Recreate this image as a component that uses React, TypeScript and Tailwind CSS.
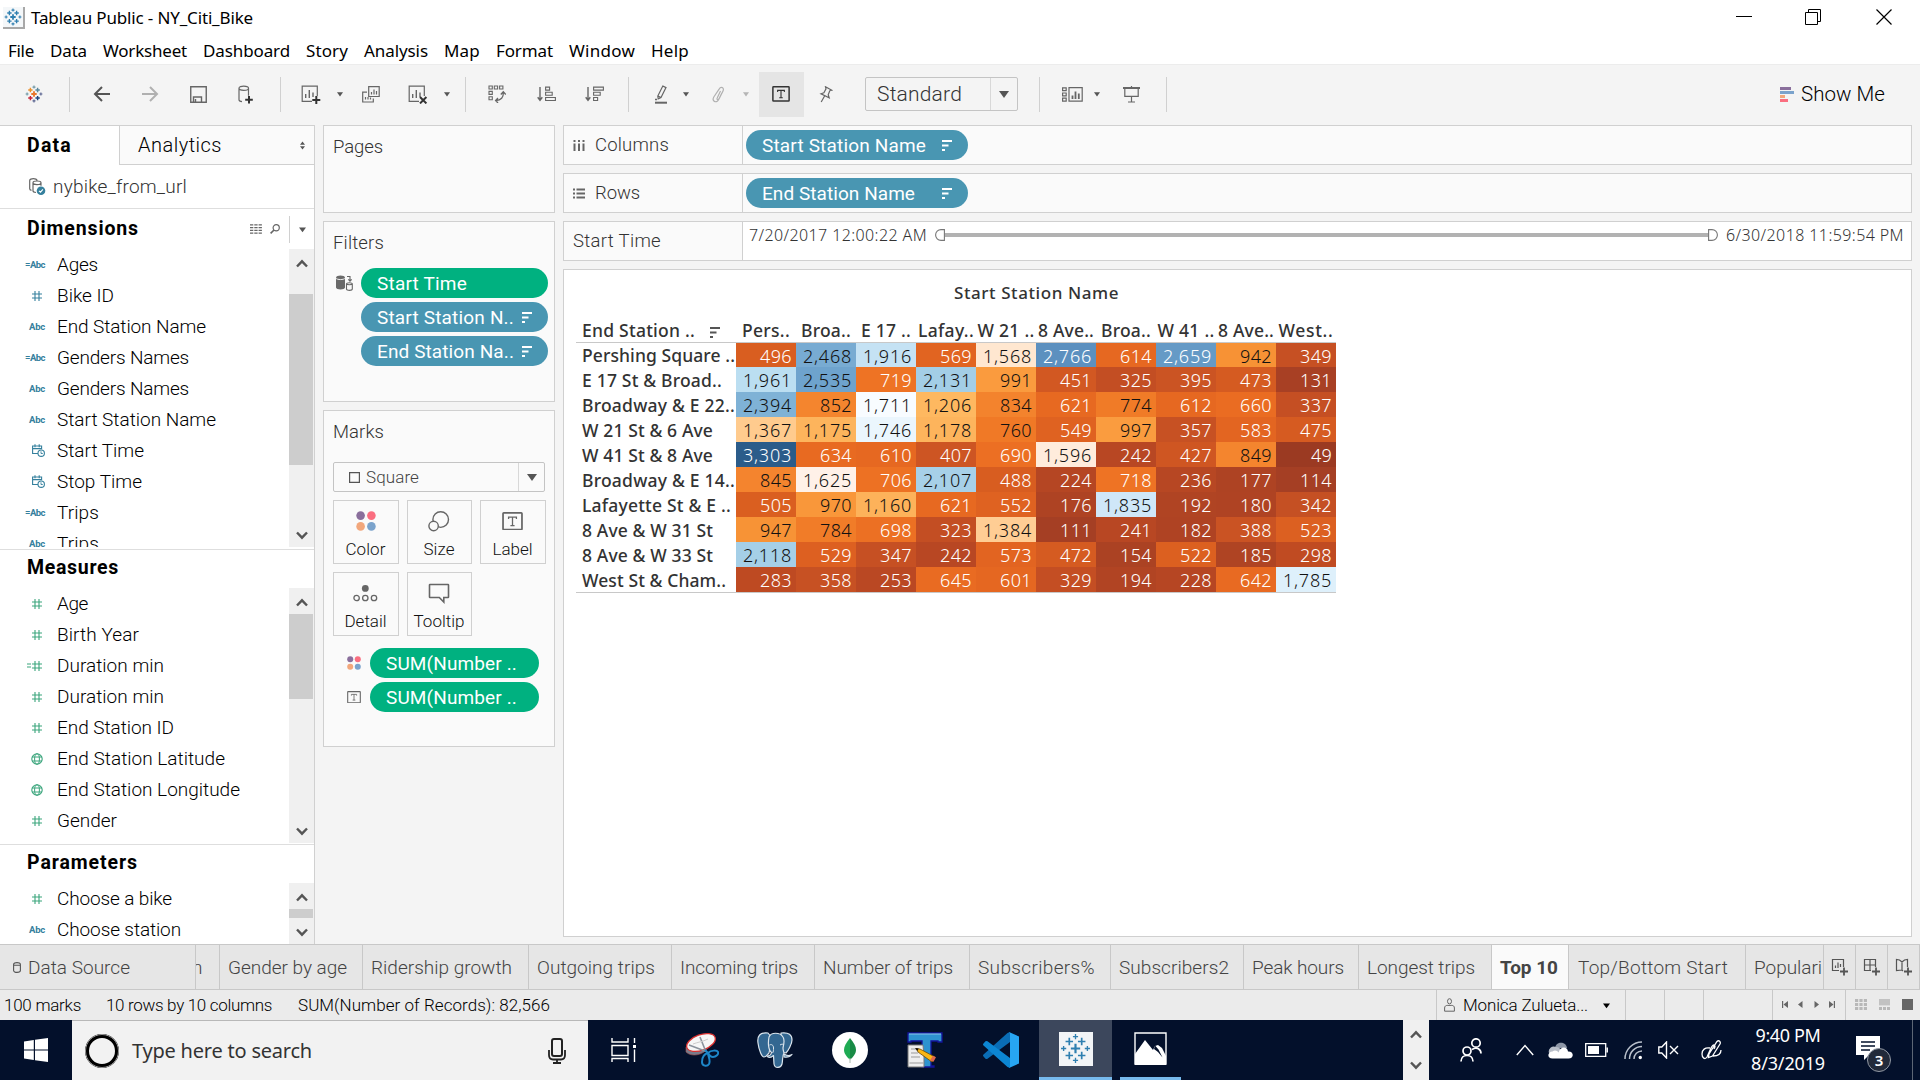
import React, { useLayoutEffect, useRef, useState } from "react";

/* Text run set to a fixed advance width by spreading the tracking. */
function T({ w, children, className = "" }: { w: number; children: string; className?: string }) {
  const ref = useRef<HTMLSpanElement>(null);
  const [ls, setLs] = useState(0);
  useLayoutEffect(() => {
    const el = ref.current;
    if (!el) return;
    el.style.letterSpacing = "0px";
    const natural = el.getBoundingClientRect().width;
    setLs((w - natural) / children.length);
    el.style.letterSpacing = (w - natural) / children.length + "px";
  }, [w, children]);
  return (
    <span ref={ref} className={"inline-block shrink-0 whitespace-pre leading-none " + className} style={{ letterSpacing: ls }}>
      {children}
    </span>
  );
}

type IconProps = { w: number; h: number; children: React.ReactNode; className?: string; vb?: string };
const I = ({ w, h, children, className = "", vb }: IconProps) => (
  <svg width={w} height={h} viewBox={vb ?? `0 0 ${w} ${h}`} fill="none" className={"block shrink-0 " + className}>
    {children}
  </svg>
);

const Caret = ({ s = 6, c = "#555" }: { s?: number; c?: string }) => (
  <I w={s} h={s} vb="0 0 10 10"><path d="M0 2h10L5 9z" fill={c} /></I>
);

/* ---------- Tableau mark ---------- */
const plus = (x: number, y: number, r: number) => `M${x - r} ${y}h${2 * r}M${x} ${y - r}v${2 * r}`;
const Mark = ({ s, cs, sw = 1.4 }: { s: number; cs: string[]; sw?: number }) => (
  <I w={s} h={s} vb="0 0 24 24">
    <path d={plus(12, 12, 3.6)} stroke={cs[0]} strokeWidth={sw * 1.3} />
    <path d={plus(7.2, 6.6, 2.9)} stroke={cs[1]} strokeWidth={sw} />
    <path d={plus(16.8, 6.6, 2.9)} stroke={cs[2]} strokeWidth={sw} />
    <path d={plus(7.2, 17.4, 2.9)} stroke={cs[3]} strokeWidth={sw} />
    <path d={plus(16.8, 17.4, 2.9)} stroke={cs[4]} strokeWidth={sw} />
    <path d={plus(12, 2.8, 2)} stroke={cs[5]} strokeWidth={sw * 0.8} />
    <path d={plus(12, 21.2, 2)} stroke={cs[6]} strokeWidth={sw * 0.8} />
    <path d={plus(2.8, 12, 2)} stroke={cs[5]} strokeWidth={sw * 0.8} />
    <path d={plus(21.2, 12, 2)} stroke={cs[6]} strokeWidth={sw * 0.8} />
  </I>
);
const blueMark = Array(7).fill("#2f7fb0");

/* ---------- toolbar ---------- */
const G = "#666";
const Slot = ({ className, children }: { className: string; children?: React.ReactNode }) => (
  <div className={"flex h-full shrink-0 items-center justify-center overflow-visible " + className}>{children}</div>
);
const Sep = ({ className = "" }: { className?: string }) => <div className={"h-[35px] w-px shrink-0 bg-[#d0d0d0] " + className} />;

const ArrowL = ({ c, flip }: { c: string; flip?: boolean }) => (
  <I w={18} h={16} className={flip ? "-scale-x-100" : ""}>
    <path d="M17 8H2M9 1L2 8l7 7" stroke={c} strokeWidth="2" />
  </I>
);
const Save = () => (
  <I w={17} h={17}>
    <path d="M.75 .75h15.5v15.5H.75zM3.5 16v-5h8v5M5.5 16v-3" stroke={G} strokeWidth="1.4" />
  </I>
);
const DbPlus = () => (
  <I w={16} h={19}>
    <path d="M1 3.2C1 .4 10.5.4 10.5 3.2S1 6 1 3.2v11.5c0 1 1.2 1.7 3 1.9M10.5 3.2v7.5" stroke={G} strokeWidth="1.2" />
    <path d="M11 11v7.5M7.2 14.8h7.6" stroke="#333" strokeWidth="2" />
  </I>
);
const Sheet = ({ x }: { x?: boolean }) => (
  <I w={20} h={19}>
    <path d="M11 16.3H1.2V1.2h15.1V11" stroke={G} strokeWidth="1.2" />
    <path d="M4.7 13V9M8.3 13V5M12 12V7.5" stroke={G} strokeWidth="1.4" />
    {x ? <path d="M12 12l6.4 6.4M18.4 12L12 18.4" stroke="#333" strokeWidth="2" /> : <path d="M15.3 11v8M11.3 15h8" stroke="#333" strokeWidth="2" />}
  </I>
);
const Dup = () => (
  <I w={18} h={17}>
    <path d="M6.7 .7h10.5v9.8H6.7z" stroke={G} strokeWidth="1.2" />
    <path d="M9.5 8.5V6M12 8.5V3.5M14.5 8.5V5" stroke={G} strokeWidth="1.2" />
    <path d="M5 6.2H.7v9.8h10.6v-3.5M3.5 13.5V11M6 13.5v-2.5M8.5 13.5v-2" stroke={G} strokeWidth="1.2" />
  </I>
);
const Swap = () => (
  <I w={18} h={18}>
    <path d="M1 1h3.3v3H1zM6.3 1h3.3v3H6.3zM11.6 1h3.3v3h-3.3zM1 6.4h3.3v3H1zM1 11.8h3.3v3H1z" stroke={G} strokeWidth="1.1" />
    <path d="M15.3 7.5c.3 5-2.2 7.800-7.500 8M12.800 9.500l2.500-2.700 2.500 2.700M10 13l-2.400 2.500L10 18" stroke={G} strokeWidth="1.3" />
  </I>
);
const SortBars = ({ desc }: { desc?: boolean }) => (
  <I w={19} h={16}>
    <path d="M3 1v13M.7 11.3L3 14.3l2.3-3" stroke={G} strokeWidth="1.4" />
    {desc ? (
      <path d="M8.6 1.1h9.8v3H8.6zM8.6 6.3h6.6v3H8.6zM8.6 11.5h4v3h-4z" stroke={G} strokeWidth="1.1" />
    ) : (
      <path d="M8.6 1.1h4v3h-4zM8.6 6.3h6.6v3H8.6zM8.6 11.5h9.8v3H8.6z" stroke={G} strokeWidth="1.1" />
    )}
  </I>
);
const Pen = () => (
  <I w={14} h={19}>
    <path d="M8.8 1l3.2 1.6-5 10-2.8 1.3-.4-2.9zM4 11l3 1.5" stroke={G} strokeWidth="1.2" />
    <path d="M1 14.5h2" stroke={G} strokeWidth="1.4" />
    <path d="M1 17.7h12" stroke={G} strokeWidth="2" />
  </I>
);
const Clip = () => (
  <I w={14} h={17}>
    <path d="M9.500 5L6.200 12c-.8 1.600 1 2.400 1.800.9L12 5c1.700-3.400-2.200-5-3.900-1.800L2.800 11c-2.300 4 2.500 6.700 4.600 3l3.200-6.500" stroke="#b0b0b0" strokeWidth="1.2" />
  </I>
);
const TBox = ({ s, c = "#444", sw = 1.5 }: { s: number; c?: string; sw?: number }) => (
  <I w={s} h={s * 0.88} vb="0 0 18 16">
    <rect x=".8" y=".8" width="16.4" height="14.4" rx=".6" stroke={c} strokeWidth={sw} />
    <path d="M5.6 6V4.4h6.8V6M9 4.4v7.4M7.2 11.8h3.6" stroke={c} strokeWidth="1.1" />
  </I>
);
const Pin = () => (
  <I w={14} h={17}>
    <path d="M6.500 .8l6.300 3.400-2 .6-1.600 4 1 3-8.200-4 2.900-1L7 2.800zM5.600 10l-3.400 6" stroke={G} strokeWidth="1.2" />
  </I>
);
const Cards = () => (
  <I w={21} h={15}>
    <path d="M.6 .8h3.6v2.9H.6zM.6 6h3.6v2.9H.6zM.6 11.2h3.6v2.9H.6zM7 .7h13.2v13.5H7z" stroke={G} strokeWidth="1.2" />
    <path d="M10.5 12V8.5M13.5 12V4.5M16.8 12V6.5" stroke={G} strokeWidth="1.8" />
  </I>
);
const Present = () => (
  <I w={17} h={17}>
    <path d="M0 2h17" stroke={G} strokeWidth="2" />
    <path d="M1.8 2.5v7.8h13.4V2.5M8.5 0v2M8.5 10.5v5.3M5 16h7" stroke={G} strokeWidth="1.2" />
  </I>
);

/* ---------- pills ---------- */
const SortGlyph = ({ c = "#fff" }: { c?: string }) => (
  <I w={10} h={11}>
    <path d="M0 1h10M0 5.5h6.5M0 10h3" stroke={c} strokeWidth="2" />
  </I>
);
const Pill = ({ label, w, green, sort, className }: { label: string; w: number; green?: boolean; sort?: string; className: string }) => (
  <div className={"flex h-[30px] items-center rounded-full text-[19px] font-normal text-white " + (green ? "bg-[#00b180] " : "bg-[#4996b2] ") + className}>
    <T w={w}>{label}</T>
    {sort && <div className={sort}><SortGlyph /></div>}
  </div>
);

/* ---------- data pane ---------- */
type Kind = "abc" | "cabc" | "num" | "cnum" | "date" | "geo";
const Hash = ({ c }: { c: string }) => (
  <I w={10} h={10}><path d="M3 0v10M7 0v10M0 3h10M0 7h10" stroke={c} strokeWidth="1.1" /></I>
);
const FieldIcon = ({ kind, c }: { kind: Kind; c: string }) => (
  <div className="flex w-[45px] items-center justify-end">
    {kind === "abc" && <T w={16} className="text-[9.5px] font-bold text-[#35809d]">Abc</T>}
    {kind === "cabc" && <T w={20} className="text-[9.5px] font-bold text-[#35809d]">=Abc</T>}
    {kind === "num" && <div className="mr-[3px]"><Hash c={c} /></div>}
    {kind === "cnum" && (
      <div className="mr-[3px] flex items-center gap-px">
        <I w={4} h={5}><path d="M0 1h4M0 4h4" stroke={c} strokeWidth="1.1" /></I>
        <Hash c={c} />
      </div>
    )}
    {kind === "date" && (
      <I w={13} h={13}>
        <path d="M6 9.5H.6V2h9v3.2M.6 4.6h9M3 .3v3M7.2 .3v3" stroke={c} strokeWidth="1.1" />
        <circle cx="9.2" cy="9.2" r="3.2" stroke={c} strokeWidth="1.1" />
        <path d="M9 7.3v2.2h1.8" stroke={c} strokeWidth=".9" />
      </I>
    )}
    {kind === "geo" && (
      <div className="mr-[2px]">
        <I w={12} h={12}>
          <circle cx="6" cy="6" r="5.2" stroke={c} strokeWidth="1.1" />
          <ellipse cx="6" cy="6" rx="2.4" ry="5.2" stroke={c} />
          <path d="M1 4h10M1 8h10" stroke={c} />
        </I>
      </div>
    )}
  </div>
);
type Field = [Kind, string, number];
const blue = "#35809d";
const green = "#3ba57c";
const dims: Field[] = [
  ["cabc", "Ages", 41], ["num", "Bike ID", 57], ["abc", "End Station Name", 149], ["cabc", "Genders Names", 132],
  ["abc", "Genders Names", 132], ["abc", "Start Station Name", 159], ["date", "Start Time", 87], ["date", "Stop Time", 85],
  ["cabc", "Trips", 42], ["abc", "Trips", 42],
];
const meas: Field[] = [
  ["num", "Age", 31], ["num", "Birth Year", 82], ["cnum", "Duration min", 107], ["num", "Duration min", 107],
  ["num", "End Station ID", 117], ["geo", "End Station Latitude", 168], ["geo", "End Station Longitude", 183], ["num", "Gender", 60],
];
const params: Field[] = [["num", "Choose a bike", 115], ["abc", "Choose station", 124]];

const Fields = ({ items, c, className, thumb }: { items: Field[]; c: string; className: string; thumb: string }) => (
  <div className={"flex overflow-hidden " + className}>
    <div className="min-w-0 flex-1">
      {items.map(([k, name, w], i) => (
        <div key={i} className="flex h-[31px] items-center">
          <FieldIcon kind={k} c={c} />
          <T w={w} className="ml-[12px] text-[19px] font-light text-black">{name}</T>
        </div>
      ))}
    </div>
    <div className="flex w-[25px] flex-col items-start bg-[#f0f0f0]">
      <div className="flex h-[26px] w-[25px] shrink-0 items-center justify-center pt-[3px]">
        <I w={12} h={9}><path d="M1 7.5L6 2.3l5 5.2" stroke="#555" strokeWidth="2.4" /></I>
      </div>
      <div className={"w-[24px] shrink-0 bg-[#cdcdcd] " + thumb} />
      <div className="flex min-h-0 w-[25px] flex-1 items-end justify-center pb-[7px]">
        <I w={12} h={9}><path d="M1 1.5l5 5.2 5-5.2" stroke="#555" strokeWidth="2.4" /></I>
      </div>
    </div>
  </div>
);

/* ---------- heat map ---------- */
const scale: [number, number, number, number][] = [
  [49, 155, 58, 34], [131, 168, 64, 36], [176, 174, 67, 35], [242, 184, 71, 35], [283, 190, 74, 34], [347, 198, 80, 35],
  [395, 203, 84, 35], [451, 210, 88, 34], [496, 217, 94, 32], [549, 223, 98, 33], [614, 230, 104, 33], [660, 234, 108, 34],
  [706, 237, 113, 35], [784, 241, 124, 40], [849, 244, 133, 46], [942, 247, 146, 53], [991, 250, 155, 62], [1175, 253, 180, 92],
  [1206, 254, 184, 96], [1367, 255, 203, 142], [1568, 255, 231, 208], [1625, 255, 241, 232], [1711, 248, 252, 255],
  [1746, 235, 246, 253], [1785, 222, 240, 251], [1835, 207, 231, 248], [1916, 197, 226, 244], [1961, 187, 222, 241],
  [2118, 165, 207, 231], [2394, 127, 178, 214], [2468, 120, 171, 210], [2535, 110, 163, 205], [2659, 101, 154, 198],
  [2766, 92, 144, 191], [3303, 43, 92, 138],
];
function heat(v: number) {
  let i = 0;
  while (i < scale.length - 2 && v > scale[i + 1][0]) i++;
  const a = scale[i];
  const b = scale[i + 1];
  const t = (v - a[0]) / (b[0] - a[0]);
  return `rgb(${[1, 2, 3].map((k) => Math.round(a[k] + (b[k] - a[k]) * t)).join(",")})`;
}
const cols: [string, number][] = [
  ["Pers..", 48], ["Broa..", 50], ["E 17 ..", 50], ["Lafay..", 56], ["W 21 ..", 57],
  ["8 Ave..", 56], ["Broa..", 50], ["W 41 ..", 57], ["8 Ave..", 56], ["West..", 55],
];
const rows: [string, number, number[]][] = [
  ["Pershing Square ..", 153, [496, 2468, 1916, 569, 1568, 2766, 614, 2659, 942, 349]],
  ["E 17 St & Broad..", 140, [1961, 2535, 719, 2131, 991, 451, 325, 395, 473, 131]],
  ["Broadway & E 22..", 153, [2394, 852, 1711, 1206, 834, 621, 774, 612, 660, 337]],
  ["W 21 St & 6 Ave", 131, [1367, 1175, 1746, 1178, 760, 549, 997, 357, 583, 475]],
  ["W 41 St & 8 Ave", 131, [3303, 634, 610, 407, 690, 1596, 242, 427, 849, 49]],
  ["Broadway & E 14..", 153, [845, 1625, 706, 2107, 488, 224, 718, 236, 177, 114]],
  ["Lafayette St & E ..", 149, [505, 970, 1160, 621, 552, 176, 1835, 192, 180, 342]],
  ["8 Ave & W 31 St", 131, [947, 784, 698, 323, 1384, 111, 241, 182, 388, 523]],
  ["8 Ave & W 33 St", 131, [2118, 529, 347, 242, 573, 472, 154, 522, 185, 298]],
  ["West St & Cham..", 144, [283, 358, 253, 645, 601, 329, 194, 228, 642, 1785]],
];

const HeatMap = () => (
  <div className="ml-[12px] w-[760px] font-['Noto_Sans',sans-serif] text-[#333]">
    <div className="flex h-[46px] items-center pb-[2px] pl-[378px] text-[17px] font-medium"><T w={165}>Start Station Name</T></div>
    <div className="flex h-[27px] items-end border-b border-[#c8c8c8] pb-[3px] text-[17.5px] font-medium">
      <div className="flex w-[160px] items-center pl-[6px]">
        <T w={113}>End Station ..</T>
        <div className="ml-[15px] pt-1"><SortGlyph c="#555" /></div>
      </div>
      {cols.map(([c, w], i) => (
        <div key={i} className="flex w-[60px] justify-center"><T w={w}>{c}</T></div>
      ))}
    </div>
    <div className="border-b border-[#c8c8c8]">
      {rows.map(([name, w, vals], r) => (
        <div key={r} className={"flex " + (r ? "h-[25px]" : "h-[24px]")}>
          <div className="flex w-[160px] items-center pt-[2px] pl-[6px] text-[17.5px] font-medium"><T w={w}>{name}</T></div>
          {vals.map((v, i) => {
            const dark = v >= 740 && v < 2600;
            return (
              <div
                key={i}
                className={"flex w-[60px] items-center justify-end pt-px pr-[4px] text-[18px] font-light " + (dark ? "text-[#111]" : "text-white")}
                style={{ backgroundColor: heat(v) }}
              >
                <T w={v >= 1000 ? 49 : v >= 100 ? 32 : 21}>{v.toLocaleString("en-US")}</T>
              </div>
            );
          })}
        </div>
      ))}
    </div>
  </div>
);

/* ---------- cards ---------- */
const Dots = ({ s }: { s: number }) => (
  <I w={s} h={s} vb="0 0 20 20">
    <circle cx="4.6" cy="4.6" r="4.3" fill="#8a6f9c" /><circle cx="15.4" cy="4.6" r="4.3" fill="#fa6e80" />
    <circle cx="4.6" cy="15.4" r="4.3" fill="#f2a77c" /><circle cx="15.4" cy="15.4" r="4.3" fill="#7ba3cc" />
  </I>
);
const MarkButton = ({ label, w, className, children }: { label: string; w: number; className: string; children: React.ReactNode }) => (
  <div className={"flex h-[64px] flex-col items-center border border-[#d0d0d0] bg-[#fafafa] " + className}>
    <div className="flex h-[40px] items-center justify-center pr-px">{children}</div>
    <T w={w} className="mr-px text-[17px] font-light text-[#111]">{label}</T>
  </div>
);

const tabs: [string, string, number][] = [
  ["w-[143px] pl-[8px]", "Gender by age", 119], ["w-[166px] pl-[8px]", "Ridership growth", 141], ["w-[143px] pl-[8px]", "Outgoing trips", 118],
  ["w-[143px] pl-[8px]", "Incoming trips", 118], ["w-[155px] pl-[8px]", "Number of trips", 130], ["w-[141px] pl-[8px]", "Subscribers%", 117],
  ["w-[133px] pl-[8px]", "Subscribers2", 110], ["w-[115px] pl-[8px]", "Peak hours", 92], ["w-[133px] pl-[8px]", "Longest trips", 108],
  ["w-[77px] pl-[8px] bg-[#fafafa] font-bold", "Top 10", 58], ["w-[177px] pl-[9px]", "Top/Bottom Start", 150], ["w-[78px] pl-[8px]", "Populari", 68],
];

const PlusBadge = () => <path d="M13 9.5v8M9 13.5h8" stroke="#555" strokeWidth="1.8" />;

export default function App() {
  return (
    <div className="flex h-[1080px] w-[1920px] flex-col overflow-hidden bg-[#f4f4f4] font-['Roboto',sans-serif] text-[#333]">
      {/* title bar */}
      <div className="flex h-[36px] shrink-0 items-center bg-white pb-px font-['Noto_Sans',sans-serif]">
        <div className="ml-[3px] flex h-[22px] w-[22px] items-center justify-center border-r-2 border-b-2 border-[#a8a8a8] bg-[#f4f7f9]">
          <Mark s={18} cs={blueMark} sw={1.8} />
        </div>
        <T w={222} className="ml-[6px] text-[17px] text-black">Tableau Public - NY_Citi_Bike</T>
        <div className="ml-auto flex items-center pr-[28px] pb-[2px]">
          <I w={16} h={16}><path d="M0 7.5h16" stroke="#000" /></I>
          <I w={16} h={16} className="ml-[53px]"><path d="M.5 3.5h12v12H.5zM3.5 3.5v-3h12v12h-3" stroke="#000" /></I>
          <I w={16} h={16} className="ml-[55px]"><path d="M.5 .5l15 15M15.5 .5l-15 15" stroke="#000" strokeWidth="1.2" /></I>
        </div>
      </div>
      {/* menu */}
      <div className="flex h-[28px] shrink-0 items-center gap-[16px] bg-white pl-[8px] font-['Noto_Sans',sans-serif] text-[17px] text-black">
        <T w={26}>File</T><T w={37}>Data</T><T w={84}>Worksheet</T><T w={87}>Dashboard</T><T w={42}>Story</T>
        <T w={64}>Analysis</T><T w={36}>Map</T><T w={57}>Format</T><T w={66}>Window</T><T w={38}>Help</T>
      </div>
      {/* toolbar */}
      <div className="flex h-[61px] shrink-0 items-center border-t border-[#ececec] pb-[2px]">
        <Slot className="w-[68px]"><Mark s={18} sw={1.9} cs={["#e8762c", "#eb912c", "#59879b", "#c72035", "#1f447e", "#7199a6", "#5b6591"]} /></Slot>
        <Sep className="ml-px" />
        <Slot className="w-[64px]"><ArrowL c="#555" /></Slot>
        <Slot className="w-[32px]"><ArrowL c="#b0b0b0" flip /></Slot>
        <Slot className="w-[64px]"><Save /></Slot>
        <Slot className="w-[32px]"><DbPlus /></Slot>
        <Sep className="ml-[18px]" />
        <Slot className="ml-[5px] w-[50px]"><Sheet /></Slot>
        <Slot className="w-[8px]"><Caret /></Slot>
        <Slot className="w-[54px]"><Dup /></Slot>
        <Slot className="w-[40px]"><Sheet x /></Slot>
        <Slot className="w-[18px]"><Caret /></Slot>
        <Sep className="ml-[9px]" />
        <Slot className="w-[62px]"><Swap /></Slot>
        <Slot className="w-[36px]"><SortBars /></Slot>
        <Slot className="w-[60px]"><SortBars desc /></Slot>
        <Sep className="ml-[4px]" />
        <Slot className="ml-[10px] w-[44px]"><Pen /></Slot>
        <Slot className="w-[6px]"><Caret /></Slot>
        <Slot className="ml-[4px] w-[50px]"><Clip /></Slot>
        <Slot className="w-[6px]"><Caret c="#b5b5b5" /></Slot>
        <div className="ml-[10px] flex h-[45px] w-[45px] shrink-0 items-center justify-center bg-[#e5e5e5] pr-[2px]"><TBox s={18} c="#333" /></div>
        <Slot className="w-[44px]"><Pin /></Slot>
        <div className="ml-[17px] flex h-[34px] w-[153px] shrink-0 items-center rounded-[2px] border border-[#c4c4c4] pl-[11px]">
          <T w={85} className="text-[21px] font-light">Standard</T>
          <div className="ml-auto flex h-full w-[27px] items-center justify-center border-l border-[#d8d8d8]"><Caret s={10} /></div>
        </div>
        <Sep className="ml-[21px]" />
        <Slot className="ml-[10px] w-[44px]"><Cards /></Slot>
        <Slot className="w-[6px]"><Caret /></Slot>
        <Slot className="w-[62px]"><Present /></Slot>
        <Sep className="ml-[4px]" />
        <div className="ml-auto flex items-center pr-[35px]">
          <I w={14} h={15}>
            <path d="M0 1.5h11" stroke="#8a6f9c" strokeWidth="3" /><path d="M0 5.5h14" stroke="#7ba3cc" strokeWidth="3" />
            <path d="M0 9.5h5" stroke="#f2a77c" strokeWidth="3" /><path d="M0 13.5h8" stroke="#fa6e80" strokeWidth="3" />
          </I>
          <T w={84} className="ml-[7px] text-[20.5px] font-light text-black">Show Me</T>
        </div>
      </div>

      {/* workspace */}
      <div className="flex h-[819px] shrink-0">
        {/* data pane */}
        <div className="flex w-[315px] shrink-0 flex-col border-r border-[#d0d0d0] bg-white">
          <div className="flex h-[40px] shrink-0 border-t border-[#d0d0d0]">
            <div className="flex w-[119px] items-center pl-[27px]"><T w={45} className="text-[19.5px] font-bold text-black">Data</T></div>
            <div className="flex flex-1 items-center border-b border-l border-[#d0d0d0] bg-[#fafafa] pl-[18px]">
              <T w={84} className="text-[20px] font-light text-black">Analytics</T>
              <I w={5} h={9} className="ml-auto mr-[9px]"><path d="M0 3.8h5L2.5 .5zM0 5.2h5L2.5 8.5z" fill="#555" /></I>
            </div>
          </div>
          <div className="flex h-[44px] shrink-0 items-center border-b border-[#dedede] pl-[29px]">
            <I w={17} h={18}>
              <path d="M.7 2.5C.7 0 8 0 8 2.5M.7 2.5v8.3c0 .8.6 1.3 1.8 1.5M4 4.8c0-2.4 8-2.4 8 0S4 7.2 4 4.8v8c0 1 1.2 1.6 3 1.7M12 4.8v3" stroke={G} strokeWidth="1.2" />
              <circle cx="12" cy="12.7" r="4.3" fill="#35809d" /><path d="M10 12.8l1.5 1.4 2.4-2.8" stroke="#fff" strokeWidth="1.1" />
            </I>
            <T w={134} className="ml-[7px] text-[19px] font-light text-[#333]">nybike_from_url</T>
          </div>
          <div className="flex h-[40px] shrink-0 items-center pl-[27px]">
            <T w={112} className="text-[19.5px] font-bold text-black">Dimensions</T>
            <I w={12} h={10} className="ml-auto">
              <path d="M0 .8h12M0 3.6h12M0 6.4h12M0 9.2h12" stroke={G} strokeDasharray="3.3 1" strokeWidth="1.2" />
            </I>
            <I w={10} h={10} className="ml-[8px]"><circle cx="6.2" cy="3.8" r="3.1" stroke={G} strokeWidth="1.2" /><path d="M4 6L.6 9.4" stroke={G} strokeWidth="1.6" /></I>
            <div className="ml-[9px] flex h-[27px] w-[25px] items-center justify-center border-l border-[#d0d0d0]"><Caret s={7} /></div>
          </div>
          <Fields items={dims} c={blue} className="h-[298px] shrink-0" thumb="mt-[19px] h-[171px]" />
          <div className="mt-[2px] flex h-[39px] shrink-0 items-center border-t border-[#dedede] pb-[2px] pl-[27px]">
            <T w={92} className="text-[19.5px] font-bold text-black">Measures</T>
          </div>
          <Fields items={meas} c={green} className="h-[255px] shrink-0" thumb="h-[85px]" />
          <div className="mt-px flex h-[39px] shrink-0 items-center border-t border-[#dedede] pb-[2px] pl-[27px]">
            <T w={111} className="text-[19.5px] font-bold text-black">Parameters</T>
          </div>
          <Fields items={params} c={green} className="h-[61px] shrink-0" thumb="h-[9px]" />
        </div>

        {/* cards */}
        <div className="ml-[8px] flex w-[232px] shrink-0 flex-col gap-[8px] font-light">
          <div className="flex h-[88px] items-start border border-[#d0d0d0] bg-[#fafafa] pt-[12px] pl-[9px]"><T w={50} className="text-[18.5px]">Pages</T></div>
          <div className="h-[181px] border border-[#d0d0d0] bg-[#fafafa] pl-[9px]">
            <div className="flex h-[46px] items-center pb-[4px]"><T w={51} className="text-[18.5px]">Filters</T></div>
            <div className="flex items-center">
              <I w={17} h={16} className="ml-[3px]">
                <path d="M0 2.5C0-.3 9-.3 9 2.5v10c0 2.6-9 2.6-9 0z" fill="#6a6a6a" /><path d="M0 3.2c1 1.8 8 1.8 9 0" stroke="#fafafa" strokeWidth=".9" />
                <path d="M11 1.5h3V6M12.3 4.3L14 6.2l1.7-1.9" stroke={G} strokeWidth="1.1" />
                <path d="M10.5 9c0-1.6 5.8-1.6 5.8 0v5c0 1.8-5.8 1.8-5.8 0zM10.5 9c.5 1 5.3 1 5.8 0" stroke={G} strokeWidth="1.1" />
              </I>
              <Pill label="Start Time" w={90} green className="ml-[8px] w-[187px] pl-[16px]" />
            </div>
            <Pill label="Start Station N.." w={137} sort="ml-[8px]" className="mt-[4px] ml-[28px] w-[187px] pl-[16px]" />
            <Pill label="End Station Na.." w={137} sort="ml-[8px]" className="mt-[4px] ml-[28px] w-[187px] pl-[16px]" />
          </div>
          <div className="h-[337px] border border-[#d0d0d0] bg-[#fafafa] pl-[9px]">
            <div className="flex h-[51px] items-center pb-[9px]"><T w={51} className="text-[18.5px]">Marks</T></div>
            <div className="flex h-[30px] w-[212px] items-center rounded-[2px] border border-[#c4c4c4] pl-[15px]">
              <I w={11} h={11}><path d="M.6 .6h9.8v9.8H.6z" stroke="#555" strokeWidth="1.2" /></I>
              <T w={53} className="ml-[6px] text-[17px] text-[#444]">Square</T>
              <div className="ml-auto flex h-full w-[26px] items-center justify-center border-l border-[#d8d8d8]"><Caret s={10} /></div>
            </div>
            <div className="mt-[8px] flex">
              <MarkButton label="Color" w={40} className="w-[66px]"><Dots s={20} /></MarkButton>
              <MarkButton label="Size" w={31} className="ml-[8px] w-[65px]">
                <I w={22} h={21}><circle cx="12.7" cy="8.6" r="7.8" stroke={G} strokeWidth="1.4" /><circle cx="5.6" cy="15" r="4.7" fill="#fafafa" stroke={G} strokeWidth="1.4" /></I>
              </MarkButton>
              <MarkButton label="Label" w={40} className="ml-[8px] w-[66px]"><TBox s={21} c={G} /></MarkButton>
            </div>
            <div className="mt-[8px] flex">
              <MarkButton label="Detail" w={42} className="w-[66px]">
                <I w={25} h={17}>
                  <circle cx="12.3" cy="3.4" r="3.4" fill={G} />
                  <circle cx="3.6" cy="13" r="2.7" stroke={G} strokeWidth="1.3" /><circle cx="12.3" cy="13" r="2.7" stroke={G} strokeWidth="1.3" /><circle cx="21" cy="13" r="2.7" stroke={G} strokeWidth="1.3" />
                </I>
              </MarkButton>
              <MarkButton label="Tooltip" w={51} className="ml-[8px] w-[65px]">
                <I w={22} h={21}><path d="M2 1.5h18q.5 0 .5.5v12q0 .5-.5.5h-4.2V19l-4.500-4.500H2q-.5 0-.5-.5V2q0-.5.5-.5z" stroke={G} strokeWidth="1.6" /></I>
              </MarkButton>
            </div>
            <div className="mt-[12px] flex items-center pl-[14px]"><Dots s={14} /><Pill label="SUM(Number .." w={131} green className="ml-[9px] w-[169px] pl-[16px]" /></div>
            <div className="mt-[4px] flex items-center pl-[14px]"><TBox s={14} c={G} sw={1.4} /><Pill label="SUM(Number .." w={131} green className="ml-[9px] w-[169px] pl-[16px]" /></div>
          </div>
        </div>

        {/* shelves and view */}
        <div className="ml-[8px] flex w-[1349px] shrink-0 flex-col gap-[8px] font-light">
          <div className="flex h-[40px] border border-[#d0d0d0] bg-[#fafafa]">
            <div className="flex w-[179px] items-center border-r border-[#d0d0d0] pl-[9px]">
              <I w={12} h={11}><path d="M1.500 3.500V11M6 3.500V11M10.500 3.500V11M1.500 0v2M6 0v2M10.500 0v2" stroke={G} strokeWidth="2" /></I>
              <T w={74} className="ml-[10px] text-[18.5px]">Columns</T>
            </div>
            <Pill label="Start Station Name" w={164} sort="ml-[16px]" className="mt-[4px] ml-[3px] w-[222px] pl-[16px]" />
          </div>
          <div className="flex h-[40px] border border-[#d0d0d0] bg-[#fafafa]">
            <div className="flex w-[179px] items-center border-r border-[#d0d0d0] pl-[9px]">
              <I w={12} h={11}><path d="M3.5 1.5H12M3.5 5.5H12M3.5 9.5H12M0 1.5h2M0 5.5h2M0 9.5h2" stroke={G} strokeWidth="1.8" /></I>
              <T w={45} className="ml-[10px] text-[18.5px]">Rows</T>
            </div>
            <Pill label="End Station Name" w={153} sort="ml-[27px]" className="mt-[4px] ml-[3px] w-[222px] pl-[16px]" />
          </div>
          <div className="flex h-[40px] border border-[#d0d0d0] bg-white">
            <div className="flex w-[179px] items-center border-r border-[#d0d0d0] bg-[#fafafa] pl-[9px]"><T w={88} className="text-[18.5px]">Start Time</T></div>
            <div className="flex flex-1 items-center pb-[13px] pl-[6px] font-['Noto_Sans',sans-serif] text-[16px]">
              <T w={178}>7/20/2017 12:00:22 AM</T>
              <I w={10} h={12} className="ml-[8px]"><path d="M9.4 .6v10.8H6a5.4 5.4 0 010-10.8z" stroke="#777" strokeWidth="1.1" /></I>
              <div className="h-[4px] w-[763px] bg-[#b2b2b2]" />
              <I w={10} h={12}><path d="M.6 .6v10.8H4A5.4 5.4 0 004 .6z" stroke="#777" strokeWidth="1.1" /></I>
              <T w={178} className="ml-[8px]">6/30/2018 11:59:54 PM</T>
            </div>
          </div>
          <div className="h-[668px] border border-[#d0d0d0] bg-white"><HeatMap /></div>
        </div>
      </div>

      {/* sheet tabs */}
      <div className="flex h-[46px] shrink-0 border-y border-[#c8c8c8] bg-[#e6e6e6] text-[19px] font-light text-[#444]">
        <div className="flex w-[196px] shrink-0 items-center border-r border-[#c8c8c8] pl-[13px]">
          <I w={8} h={11}><path d="M.6 2.4C.6 0 7.4 0 7.4 2.4v6.2c0 2.4-6.8 2.4-6.8 0zM.6 3.2h6.8" stroke="#555" strokeWidth="1.1" /></I>
          <T w={102} className="ml-[7px]">Data Source</T>
        </div>
        <div className="flex w-[24px] shrink-0 items-center overflow-hidden border-r border-[#c8c8c8]"><span className="-ml-[4px] leading-none">n</span></div>
        {tabs.map(([cls, name, w]) => (
          <div key={name} className={"flex shrink-0 items-center overflow-hidden border-r border-[#c8c8c8] " + cls}><T w={w}>{name}</T></div>
        ))}
        <div className="flex w-[32px] shrink-0 items-center justify-center border-r border-[#c8c8c8]">
          <I w={17} h={18}><path d="M8 12.5H1.5v-11h11V9M4.5 10V7.5M7 10V4.5M9.5 9V6" stroke="#555" strokeWidth="1.2" /><PlusBadge /></I>
        </div>
        <div className="flex w-[32px] shrink-0 items-center justify-center border-r border-[#c8c8c8]">
          <I w={17} h={18}><path d="M8 12.5H1.5v-11h11V9M7 1.5v11M1.5 7h11" stroke="#555" strokeWidth="1.2" /><PlusBadge /></I>
        </div>
        <div className="flex w-[32px] shrink-0 items-center justify-center border-r border-[#c8c8c8]">
          <I w={17} h={18}><path d="M8 13l-1-1-5.500.5v-11L4.500 2 7 4l2.500-2 3-.5V9M7 4v8" stroke="#555" strokeWidth="1.2" /><PlusBadge /></I>
        </div>
      </div>

      {/* status bar */}
      <div className="flex h-[30px] shrink-0 items-center bg-[#ebebeb] text-[17px] font-light text-black">
        <T w={77} className="ml-[4px]">100 marks</T>
        <T w={166} className="ml-[25px]">10 rows by 10 columns</T>
        <T w={252} className="ml-[26px]">SUM(Number of Records): 82,566</T>
        <div className="ml-auto flex h-full items-center">
          <div className="flex h-full w-[189px] items-center border-l border-[#c8c8c8] pl-[7px]">
            <I w={11} h={14}><ellipse cx="5.5" cy="3.3" rx="2" ry="2.6" stroke={G} /><path d="M.6 13.2V10c0-2 1.5-2.6 2.6-2.6h4.6c1.2 0 2.6.6 2.6 2.6v3.2z" stroke={G} /></I>
            <T w={125} className="ml-[8px]">Monica Zulueta...</T>
            <div className="ml-[15px]"><Caret s={7} c="#000" /></div>
          </div>
          <div className="h-full w-[39px] border-l border-[#c8c8c8]" />
          <div className="h-full w-[39px] border-l border-[#c8c8c8]" />
          <div className="h-full w-[69px] border-l border-[#c8c8c8]" />
          <div className="flex h-full w-[73px] items-center gap-[10px] border-l border-[#c8c8c8] pb-[2px] pl-[9px]">
            <I w={6} h={7}><path d="M.6 0v7" stroke={G} strokeWidth="1.2" /><path d="M6 0v7L1.5 3.5z" fill={G} /></I>
            <I w={5} h={7}><path d="M4.5 0v7L0 3.5z" fill={G} /></I>
            <I w={5} h={7} className="ml-px"><path d="M.5 0v7L5 3.5z" fill={G} /></I>
            <I w={6} h={7}><path d="M5.4 0v7" stroke={G} strokeWidth="1.2" /><path d="M0 0v7l4.500-3.500z" fill={G} /></I>
          </div>
          <div className="flex h-full w-[75px] items-center border-l border-[#c8c8c8] pb-[2px] pl-[9px]">
            <I w={12} h={11}><path d="M0 1.5h12M0 5.5h12M0 9.5h12" stroke="#b8b8b8" strokeWidth="3" strokeDasharray="3.2 1.2" /></I>
            <I w={11} h={11} className="ml-[12px]"><path d="M0 3.2h11" stroke="#c2c2c2" strokeWidth="6.4" /><path d="M0 9.5h11" stroke="#b8b8b8" strokeWidth="3" strokeDasharray="3 1" /></I>
            <div className="ml-[12px] h-[11px] w-[11px] bg-[#666]" />
          </div>
        </div>
      </div>

      {/* taskbar */}
      <div className="flex h-[60px] shrink-0 items-center bg-[#03102b] font-['Noto_Sans',sans-serif] text-white">
        <div className="flex w-[72px] items-center justify-center">
          <I w={24} h={24}><path d="M0 3.4L9.800 2v9.400H0zM11 1.800L24 0v11.400H11zM0 12.600h9.800V22L0 20.600zM11 12.600h13V24l-13-1.800z" fill="#fff" /></I>
        </div>
        <div className="flex h-full w-[516px] items-center border-t border-[#b8b8b8] bg-[#f2f2f2] pl-[13px]">
          <div className="h-[34px] w-[34px] rounded-full border-[4px] border-black outline outline-[#999] -outline-offset-1" />
          <T w={180} className="ml-[13px] text-[20px] text-[#333]">Type here to search</T>
          <I w={18} h={26} className="ml-auto mr-[22px]">
            <rect x="4" y="1" width="10" height="17" rx="2" stroke="#222" strokeWidth="2" />
            <path d="M1 12v5c0 3 2 4.500 4 4.500h8c2 0 4-1.500 4-4.500v-5M9 22v3M5 25h8" stroke="#222" strokeWidth="1.8" />
          </I>
        </div>
        <div className="ml-[23px] w-[26px]">
          <I w={26} h={24}><path d="M1 0v4h16V0M1 7.500h16v10H1zM1 24v-3.500h16V24M23.500 0v5M23.500 11.500V24" stroke="#fff" strokeWidth="1.4" /><path d="M22 7h3v3h-3z" fill="#fff" /></I>
        </div>
        <div className="ml-[20px] flex w-[80px] justify-center pl-[10px]">
          <I w={34} h={36}>
            <path d="M1 15v5c4 4 12 4 18 0l10-10-6 2C16 16 8 17 1 15z" fill="#777c8c" stroke="#a8504f" strokeWidth=".6" />
            <ellipse cx="16" cy="10.500" rx="15" ry="7.800" transform="rotate(-20 16 10.500)" fill="#f6f6f6" stroke="#d9302f" strokeWidth="1.300" />
            <path d="M15 5l6 15M4 13l16 6" stroke="#8b929c" strokeWidth="1.600" />
            <path d="M8 12c5-2 9-2 15-5" stroke="#ccc" />
            <path d="M20 18l3 3c3-3 9-3 10-1s-2 5-5 5c-2 0-4-2-5-4 0 4 3 7 1 11-2 3-7 2-7-2s2-8 6-9z" stroke="#1d86c8" strokeWidth="2" />
          </I>
        </div>
        <div className="flex w-[75px] justify-center">
          <I w={36} h={36}>
            <g fill="#336791" stroke="#dbe5ed" strokeWidth="1.200" strokeLinejoin="round">
              <path d="M11 1C3 0 0 4 1 11c1 8 4 14 6 14s3-2 5-4l3-15z" />
              <path d="M24 1c8-1 11 2 11 7 0 4-4 11-6 13l-5-1z" />
              <path d="M12 5c2-5 11-5 14 0 2 3 1 7 0 11 0 2 .5 3 1 5-2 3-1 7-2 11-1 4-7 5-8 0l-.500-8.500C14 26 11 26 10 24c2 0 4-1 4.500-3.500C11 18 11 10 12 5z" />
              <path d="M27 22c2 1.500 5 2 8 .5-2 2.500-5 3-8 2.500z" />
            </g>
            <path d="M12.500 13c2-1 4 0 4 3 0 2 0 4-1 5M23 13c1.500-1 3-1 3.500-.5" stroke="#dbe5ed" />
          </I>
        </div>
        <div className="flex w-[75px] justify-center">
          <div className="flex h-[36px] w-[36px] items-center justify-center rounded-full bg-white">
            <I w={12} h={25}><path d="M6 0C2 5 0 8.500 0 12s3 7.500 6 9.500z" fill="#1fab54" /><path d="M6 0c4 5 6 8.500 6 12s-3 7.500-6 9.500z" fill="#188a45" /><path d="M6 20v5" stroke="#a8b8ae" /></I>
          </div>
        </div>
        <div className="flex w-[75px] justify-center">
          <I w={36} h={36}>
            <path d="M1 1h34v9h-4V9h-7v25h3v1H15V9H4v1H1z" fill="#2e93cf" stroke="#14149a" strokeWidth="1.300" />
            <path d="M2 2h32" stroke="#8cc6ea" />
            <path d="M1 13h15l1 12v10H1z" fill="#eee" stroke="#777" />
            <path d="M4 17h8M4 21h7M4 25h9M2.500 31h14" stroke="#999" />
            <path d="M9 16.500l4 .5 15 8-3 5L11 20z" fill="#f9b614" stroke="#6b4a08" strokeWidth=".8" /><path d="M26 23.800l3 1.500-2.500 4.500-3.500-1.500z" fill="#e0664a" /><path d="M8 16l3.500.5-1 2.500z" fill="#111" />
          </I>
        </div>
        <div className="flex w-[77px] justify-center">
          <I w={36} h={36}>
            <path d="M.500 24.500q-1-1 0-2L24.500 1 27 0v10L4.500 26.800q-1 .6-2 0z" fill="#0a6db5" />
            <path d="M.500 11.500q-1 1 0 2L24.500 35l2.500 1V26L4.500 9.200q-1-.6-2 0z" fill="#0c86d3" />
            <path d="M26 0l10 4.500v27L26 36q1-.5 1-2V2q0-1.500-1-2z" fill="#27a5f2" />
          </I>
        </div>
        <div className="flex h-full w-[73px] flex-col items-center bg-[#3c475c]">
          <div className="flex flex-1 items-center"><div className="flex h-[34px] w-[34px] items-center justify-center bg-[#f2f4f6]"><Mark s={31} cs={blueMark} sw={1.3} /></div></div>
          <div className="h-[3px] w-full bg-[#76b9ed]" />
        </div>
        <div className="ml-[8px] flex h-full w-[61px] flex-col items-center">
          <div className="flex flex-1 items-center">
            <I w={33} h={33}><path d="M1 1h31v31H1z" stroke="#fff" strokeWidth="1.400" /><path d="M1 22L11 8l8 10 2-4 3-1 4 3 4 8v9H1z" fill="#fff" /><path d="M21 13.500l3.500 4 4 8-4.500-5.500-4-3z" fill="#03102b" /></I>
          </div>
          <div className="h-[3px] w-full bg-[#76b9ed]" />
        </div>
        <div className="ml-[222px] flex h-full w-[26px] flex-col items-center justify-between bg-[#f0f0f0] py-[10px]">
          <I w={12} h={9}><path d="M1 7.500L6 2.300l5 5.200" stroke="#555" strokeWidth="2.400" /></I>
          <I w={12} h={9}><path d="M1 1.500l5 5.200 5-5.200" stroke="#555" strokeWidth="2.400" /></I>
        </div>
        <I w={22} h={24} className="ml-[31px]">
          <circle cx="16" cy="5" r="4.200" stroke="#fff" strokeWidth="1.700" /><path d="M12 11.500c5-3.500 9 0 9 4" stroke="#fff" strokeWidth="1.700" />
          <circle cx="7" cy="13" r="4" stroke="#fff" strokeWidth="1.700" /><path d="M1 23.500c0-8 12-8 12 0" stroke="#fff" strokeWidth="1.700" />
        </I>
        <I w={18} h={12} className="ml-[34px]"><path d="M.8 11L9 1.500 17.200 11" stroke="#fff" strokeWidth="1.400" /></I>
        <I w={25} h={17} className="ml-[14px]"><path d="M7 6c1-7 11-7 12 0z" fill="#8d96a6" /><path d="M1 11a5 5 0 017-6c5 0 6 5 6 7z" fill="#b8bec8" /><path d="M4.500 16.500c-6 0-5-7 0-7 2-2 5-1 6 1 2-7 9-6 9.500-1 6-.5 6.500 7 .500 7z" fill="#fff" /></I>
        <I w={23} h={14} className="ml-[12px]"><path d="M.7 .7h20v12.600H.7z" stroke="#fff" strokeWidth="1.300" /><path d="M22.200 4.500v5" stroke="#fff" strokeWidth="1.500" /><path d="M3 3h11v8H3z" fill="#fff" /></I>
        <I w={19} h={19} className="ml-[16px]">
          <path d="M1 18C1 8.600 8.600 1 18 1M5.500 18C5.500 11 11 5.500 18 5.500M10 18c0-4.500 3.500-8 8-8" stroke="#b9c0cb" strokeWidth="1.500" /><circle cx="16.300" cy="16.500" r="1.700" fill="#fff" />
        </I>
        <I w={21} h={18} className="ml-[15px]"><path d="M.8 6h3L8.500 1v16l-4.700-5h-3zM12 5l8 8M20 5l-8 8" stroke="#fff" strokeWidth="1.400" /></I>
        <I w={21} h={20} className="ml-[22px]"><path d="M8 14L16 1.500c2-2 4 .5 3 2.500l-7.500 12-4 1.500zM9 8c-5-1-8 2-8 6s3 6 5 3l4-9c3-6 5-2 3 1M12 16c5 0 8-2 8-6" stroke="#fff" strokeWidth="1.300" /></I>
        <div className="ml-[27px] flex w-[78px] flex-col items-center gap-[10px] pb-[2px] text-[18px]">
          <T w={65}>9:40 PM</T><T w={74}>8/3/2019</T>
        </div>
        <div className="relative ml-[29px] h-[44px] w-[40px] pt-[8px]">
          <I w={24} h={24}><path d="M0 0h24v19H13l-5 5v-5H0z" fill="#fff" /><path d="M5 6h14M5 10h14M5 14h9" stroke="#03102b" strokeWidth="1.300" /></I>
          <div className="absolute top-[20px] left-[11px] flex h-[24px] w-[24px] items-center justify-center rounded-full border border-[#9299a5] bg-[#222a3a] text-[15px] leading-none font-semibold">3</div>
        </div>
        <div className="ml-auto mr-[7px] h-full w-px bg-[#5d6675]" />
      </div>
    </div>
  );
}
